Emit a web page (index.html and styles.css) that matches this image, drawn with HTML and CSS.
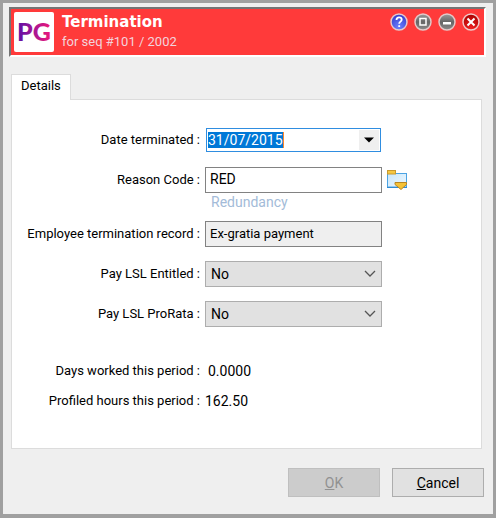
FILE: index.html
```html
<!DOCTYPE html>
<html lang="en">
<head>
    <meta charset="UTF-8">
    <meta name="viewport" content="width=device-width, initial-scale=1.0">
    <title>Termination</title>
    <link rel="stylesheet" href="styles.css">
</head>
<body>

    <form class="dialog">
        <!-- Title bar -->
        <header class="titlebar">
            <svg class="logo" viewBox="0 0 40 40" role="img" aria-label="PG">
                <defs>
                    <linearGradient id="logo-fill" x1="0" y1="0" x2="1" y2="0">
                        <stop offset="0" stop-color="#5a0fa5"/>
                        <stop offset="0.5" stop-color="#a51595"/>
                        <stop offset="1" stop-color="#f01878"/>
                    </linearGradient>
                </defs>
                <rect width="40" height="40" rx="2" fill="#fff"/>
                <text class="logo-text" x="20" y="29" text-anchor="middle" fill="url(#logo-fill)">PG</text>
            </svg>
            <div class="titles">
                <h1>Termination</h1>
                <p>for seq #101 / 2002</p>
            </div>
            <div class="window-buttons">
                <button type="button" class="round" aria-label="Help">
                    <svg viewBox="0 0 18 18">
                        <defs>
                            <radialGradient id="blue" cx="0.5" cy="0.8" r="0.8">
                                <stop offset="0" stop-color="#6d80ff"/>
                                <stop offset="1" stop-color="#3038c8"/>
                            </radialGradient>
                            <linearGradient id="grey" x1="0" y1="0" x2="0" y2="1">
                                <stop offset="0" stop-color="#9a9a9a"/>
                                <stop offset="0.5" stop-color="#666"/>
                                <stop offset="1" stop-color="#8c8c8c"/>
                            </linearGradient>
                            <radialGradient id="red" cx="0.5" cy="0.9" r="0.9">
                                <stop offset="0" stop-color="#f02020"/>
                                <stop offset="1" stop-color="#a80000"/>
                            </radialGradient>
                        </defs>
                        <circle cx="9" cy="9" r="8" fill="url(#blue)" stroke="#e4c8cc" stroke-width="1.5"/>
                        <path d="M6.5 7c0-1.800 1.100-2.600 2.600-2.600s2.600.9 2.600 2.300c0 1.900-2.500 1.900-2.500 4M9.200 12.200v1.800" fill="none" stroke="#fff" stroke-width="1.800"/>
                    </svg>
                </button>
                <button type="button" class="round" aria-label="Maximize">
                    <svg viewBox="0 0 18 18">
                        <circle cx="9" cy="9" r="8" fill="url(#grey)" stroke="#e4c8c8" stroke-width="1.5"/>
                        <rect x="6" y="5.500" width="6" height="6.500" fill="none" stroke="#fff" stroke-width="1.500"/>
                    </svg>
                </button>
                <button type="button" class="round" aria-label="Minimize">
                    <svg viewBox="0 0 18 18">
                        <circle cx="9" cy="9" r="8" fill="url(#grey)" stroke="#e4c8c8" stroke-width="1.5"/>
                        <rect x="5" y="9" width="8" height="2.500" fill="#fff"/>
                    </svg>
                </button>
                <button type="button" class="round" aria-label="Close">
                    <svg viewBox="0 0 18 18">
                        <circle cx="9" cy="9" r="8" fill="url(#red)" stroke="#f0c8c8" stroke-width="1.5"/>
                        <path d="M5.500 5.500l7 7M12.500 5.500l-7 7" stroke="#fff" stroke-width="2"/>
                    </svg>
                </button>
            </div>
        </header>

        <!-- Details tab -->
        <button type="button" class="tab">Details</button>
        <section class="panel">
            <div class="fields">
                <label for="date">Date terminated :</label>
                <div class="date-box">
                    <input type="text" id="date" value="31/07/2015">
                    <button type="button" class="drop" aria-label="Open calendar">
                        <svg viewBox="0 0 10 6"><path d="M0 0.500h10L5 5.500z" fill="#000"/></svg>
                    </button>
                </div>

                <label for="reason" class="row-start">Reason Code :</label>
                <input type="text" id="reason" class="box" value="RED">
                <button type="button" class="lookup" aria-label="Look up reason code">
                    <svg viewBox="0 0 20 20">
                        <defs>
                            <linearGradient id="folder" x1="0" y1="0" x2="1" y2="1">
                                <stop offset="0" stop-color="#c8e6fa"/>
                                <stop offset="1" stop-color="#eef8ff"/>
                            </linearGradient>
                        </defs>
                        <rect x="0.500" y="3.500" width="19" height="13.500" fill="url(#folder)" stroke="#4ba3e3"/>
                        <path d="M0 17.500h20" stroke="#2f8bd4"/>
                        <rect x="0.500" y="0.500" width="8" height="3.500" fill="#f5c842" stroke="#c99a2e"/>
                        <path d="M8 12.500h11.500v2L14 19.500l-6-5z" fill="#f5c237" stroke="#b98522"/>
                    </svg>
                </button>
                <output class="hint" for="reason">Redundancy</output>

                <label for="record" class="row-start">Employee termination record :</label>
                <input type="text" id="record" class="box readonly" value="Ex-gratia payment" readonly>

                <label for="entitled" class="row-start">Pay LSL Entitled :</label>
                <select id="entitled" class="select">
                    <option>No</option>
                    <option>Yes</option>
                </select>

                <label for="prorata" class="row-start">Pay LSL ProRata :</label>
                <select id="prorata" class="select">
                    <option>No</option>
                    <option>Yes</option>
                </select>
            </div>

            <dl class="totals">
                <dt>Days worked this period :</dt>
                <dd>0.0000</dd>
                <dt>Profiled hours this period :</dt>
                <dd>162.50</dd>
            </dl>
        </section>

        <footer class="actions">
            <button type="submit" class="btn" disabled><u>O</u>K</button>
            <button type="button" class="btn"><u>C</u>ancel</button>
        </footer>
    </form>

</body>
</html>
```

FILE: styles.css
```css
* {
    box-sizing: border-box;
}

body {
    margin: 0;
    font-family: Roboto, "Liberation Sans", sans-serif;
    font-size: 14px;
    line-height: 18px;
    color: #000;
}

input, select, button {
    font: inherit;
    color: inherit;
}

.dialog {
    min-height: 100vh;
    padding: 4px 7px 16px 6px;
    border: 3px solid #a0a0a0;
    border-bottom-width: 4px;
    background-color: #efefef;
}

/* Title bar */
.titlebar {
    display: flex;
    align-items: flex-start;
    padding: 3px 4px 3px 3px;
    border: 2px solid #fff;
    border-top-color: #747474;
    border-left-color: #747474;
    background-color: #ff3a3a;
    color: #fff;
}

.logo {
    width: 40px;
    height: 40px;
    flex: none;
}

.logo-text {
    font-family: Lato, sans-serif;
    font-size: 25px;
    font-weight: 900;
}

.titles {
    flex: 1;
    padding-left: 8px;
}

.titles h1 {
    margin: 0;
    font-family: "DejaVu Sans", sans-serif;
    font-size: 15px;
    line-height: 20px;
}

.titles p {
    margin: 0;
    font-size: 13px;
    line-height: 20px;
    color: #f3d3dc;
}

.window-buttons {
    display: flex;
    gap: 6px;
    padding-top: 1px;
}

.round, .lookup {
    padding: 0;
    border: none;
    background: none;
    cursor: pointer;
}

.round svg {
    display: block;
    width: 18px;
    height: 18px;
}

/* Tab and panel */
.tab {
    display: block;
    position: relative;
    z-index: 1;
    height: 26px;
    margin: 17px 0 -1px 2px;
    padding: 0 9px 3px;
    border: 1px solid #dcdcdc;
    border-bottom: none;
    background-color: #fff;
    font-size: 13px;
}

.panel {
    margin: 0 4px 0 2px;
    padding: 27px 8px 38px 0;
    border: 1px solid #dcdcdc;
    background-color: #fff;
}

.fields, .totals {
    display: grid;
    grid-template-columns: 188px minmax(0, 177px) 20px;
    column-gap: 5px;
    align-items: center;
}

.fields {
    row-gap: 14px;
}

.fields label, .totals dt {
    font-size: 13px;
    text-align: right;
    white-space: nowrap;
}

.row-start {
    grid-column: 1;
}

.box, .select {
    width: 100%;
    height: 26px;
    padding: 0 4px 2px;
    border: 1px solid #828282;
    border-radius: 0;
    background-color: #fff;
}

.readonly {
    background-color: #efefef;
    font-size: 13px;
}

.date-box {
    display: flex;
    align-items: center;
    justify-content: space-between;
    height: 24px;
    margin: 1px;
    padding: 1px;
    border: 1px solid #2f8de0;
}

.date-box input {
    width: 76px;
    height: 16px;
    padding: 0;
    border: none;
    border-right: 1px solid #ff8728;
    background-color: #0078d7;
    color: #fff;
    outline: none;
}

.drop {
    display: flex;
    align-items: center;
    justify-content: center;
    width: 20px;
    height: 20px;
    padding: 0;
    border: none;
    background-color: #efefef;
}

.drop svg {
    width: 10px;
    height: 6px;
}

.lookup svg {
    display: block;
    width: 20px;
    height: 20px;
}

.hint {
    grid-column: 2;
    margin: -14px 0 -4px;
    padding-left: 6px;
    color: #a3bbd8;
}

.select {
    appearance: none;
    padding: 0 24px 0 5px;
    border-color: #adadad;
    background: #e1e1e1 url("data:image/svg+xml,%3Csvg xmlns='http://www.w3.org/2000/svg' width='12' height='8'%3E%3Cpath d='M1 1l5 5 5-5' fill='none' stroke='%23555' stroke-width='1.3'/%3E%3C/svg%3E") no-repeat right 5px center;
}

.totals {
    margin: 35px 0 0;
    row-gap: 12px;
}

.totals dd {
    margin: 0;
}

.totals dd:first-of-type {
    padding-left: 3px;
}

.totals dt {
    grid-column: 1;
}

/* Bottom buttons */
.actions {
    display: flex;
    justify-content: flex-end;
    gap: 12px;
    margin: 19px 2px 0 0;
}

.btn {
    width: 92px;
    height: 29px;
    padding: 0;
    border: 1px solid #adadad;
    background-color: #e1e1e1;
    cursor: pointer;
}

.btn:disabled {
    border-color: #bfbfbf;
    background-color: #ccc;
    color: #919191;
    cursor: default;
}
```
